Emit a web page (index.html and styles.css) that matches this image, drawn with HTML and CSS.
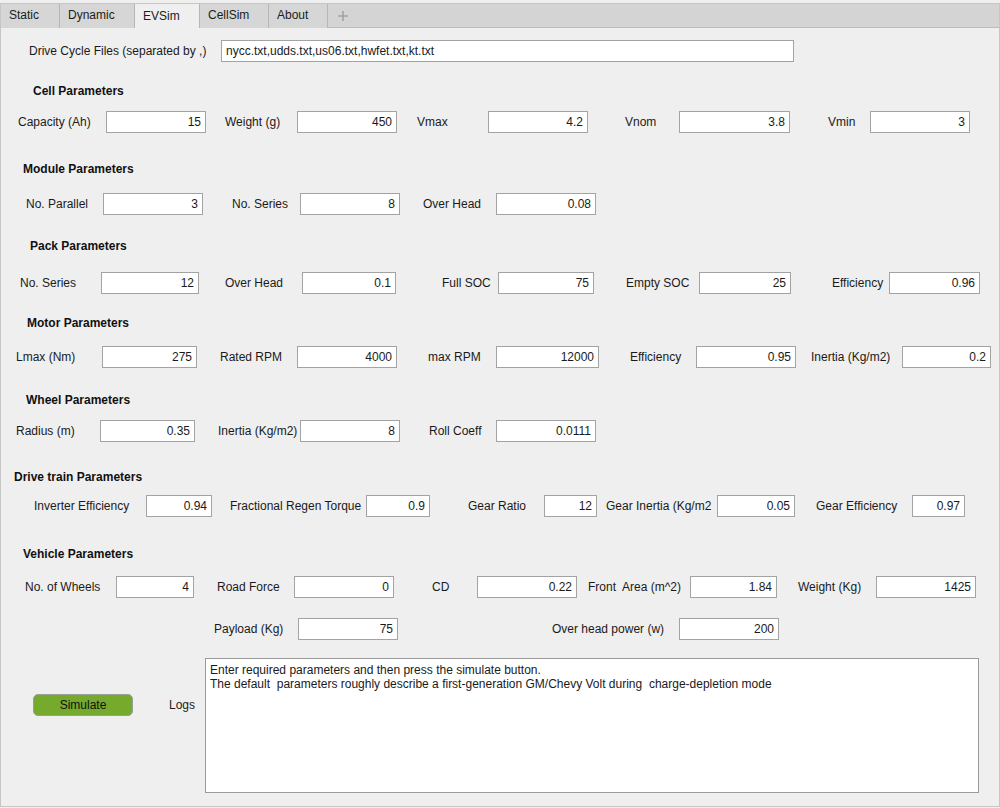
FILE: index.html
```html
<!DOCTYPE html>
<html>
<head>
<meta charset="utf-8">
<link rel="stylesheet" href="styles.css">
</head>
<body>
<div class="app">
  <div class="tabbar">
    <div class="tab w-static">Static</div>
    <div class="tab w-dynamic">Dynamic</div>
    <div class="tab w-evsim active">EVSim</div>
    <div class="tab w-cellsim">CellSim</div>
    <div class="tab w-about">About</div>
    <div class="tab-add">
      <svg width="12" height="12" viewBox="0 0 12 12"><path d="M6 1V11M1 6H11" stroke="#a2a2a2" stroke-width="1.6" fill="none"/></svg>
    </div>
  </div>
  <div class="panel">
    <div class="form">
      <div class="row r-files">
        <span class="lb">Drive Cycle Files (separated by ,)</span>
        <input class="in left" value="nycc.txt,udds.txt,us06.txt,hwfet.txt,kt.txt">
      </div>

      <h3 class="hd">Cell Parameters</h3>
      <div class="row r-cell">
        <span class="lb">Capacity (Ah)</span><input class="in" value="15">
        <span class="lb">Weight (g)</span><input class="in" value="450">
        <span class="lb">Vmax</span><input class="in" value="4.2">
        <span class="lb">Vnom</span><input class="in" value="3.8">
        <span class="lb">Vmin</span><input class="in" value="3">
      </div>

      <h3 class="hd">Module Parameters</h3>
      <div class="row r-module">
        <span class="lb">No. Parallel</span><input class="in" value="3">
        <span class="lb">No. Series</span><input class="in" value="8">
        <span class="lb">Over Head</span><input class="in" value="0.08">
      </div>

      <h3 class="hd">Pack Parameters</h3>
      <div class="row r-pack">
        <span class="lb">No. Series</span><input class="in" value="12">
        <span class="lb">Over Head</span><input class="in" value="0.1">
        <span class="lb">Full SOC</span><input class="in" value="75">
        <span class="lb">Empty SOC</span><input class="in" value="25">
        <span class="lb">Efficiency</span><input class="in" value="0.96">
      </div>

      <h3 class="hd">Motor Parameters</h3>
      <div class="row r-motor">
        <span class="lb">Lmax (Nm)</span><input class="in" value="275">
        <span class="lb">Rated RPM</span><input class="in" value="4000">
        <span class="lb">max RPM</span><input class="in" value="12000">
        <span class="lb">Efficiency</span><input class="in" value="0.95">
        <span class="lb">Inertia (Kg/m2)</span><input class="in" value="0.2">
      </div>

      <h3 class="hd">Wheel Parameters</h3>
      <div class="row r-wheel">
        <span class="lb">Radius (m)</span><input class="in" value="0.35">
        <span class="lb">Inertia (Kg/m2)</span><input class="in" value="8">
        <span class="lb">Roll Coeff</span><input class="in" value="0.0111">
      </div>

      <h3 class="hd">Drive train Parameters</h3>
      <div class="row r-drive">
        <span class="lb">Inverter Efficiency</span><input class="in" value="0.94">
        <span class="lb">Fractional Regen Torque</span><input class="in" value="0.9">
        <span class="lb">Gear Ratio</span><input class="in" value="12">
        <span class="lb">Gear Inertia (Kg/m2</span><input class="in" value="0.05">
        <span class="lb">Gear Efficiency</span><input class="in" value="0.97">
      </div>

      <h3 class="hd">Vehicle Parameters</h3>
      <div class="row r-vehicle">
        <span class="lb">No. of Wheels</span><input class="in" value="4">
        <span class="lb">Road Force</span><input class="in" value="0">
        <span class="lb">CD</span><input class="in" value="0.22">
        <span class="lb">Front  Area (m^2)</span><input class="in" value="1.84">
        <span class="lb">Weight (Kg)</span><input class="in" value="1425">
      </div>
      <div class="row r-vehicle2">
        <span class="lb">Payload (Kg)</span><input class="in" value="75">
        <span class="lb">Over head power (w)</span><input class="in" value="200">
      </div>

      <div class="bottom">
        <button class="sim">Simulate</button>
        <span class="logs-label">Logs</span>
        <div class="logs">Enter required parameters and then press the simulate button.
The default  parameters roughly describe a first-generation GM/Chevy Volt during  charge-depletion mode</div>
      </div>
    </div>
  </div>
</div>
</body>
</html>
```

FILE: styles.css
```css
* { box-sizing: border-box; }
html, body {
  margin: 0;
  padding: 0;
  background: #efefef;
}
body {
  font-family: "Liberation Sans", Arial, sans-serif;
  font-size: 12px;
  color: #1a1a1a;
}
.app {
  width: 1000px;
  height: 808px;
  padding-top: 3px;
  display: flex;
  flex-direction: column;
}

/* Tabs */
.tabbar {
  height: 25px;
  display: flex;
  background: #d4d4d4;
  border-top: 1px solid #c6c6c6;
  border-bottom: 1px solid #bdbdbd;
  border-left: 1px solid #c6c6c6;
  border-right: 1px solid #c6c6c6;
}
.tab {
  height: 24px;
  line-height: 23px;
  padding-left: 8px;
  border-right: 1px solid #b6b6b6;
  color: #1c1c1c;
  background: #d6d6d6;
}
.tab.active {
  background: #efefef;
  height: 25px;
  margin-top: -1px;
  line-height: 25px;
  border-top: 1px solid #c6c6c6;
}
.w-static { width: 59px; }
.w-dynamic { width: 75px; }
.w-evsim { width: 65px; }
.w-cellsim { width: 69px; }
.w-about { width: 59px; }
.tab-add {
  width: 30px;
  display: flex;
  align-items: center;
  justify-content: center;
}

/* Panel */
.panel {
  flex: 1;
  border-left: 1px solid #c6c6c6;
  border-right: 1px solid #c6c6c6;
  border-bottom: 1px solid #c6c6c6;
  margin-bottom: 1px;
  background: #efefef;
}
.form {
  display: grid;
  grid-template-rows: 34px 36px 35px 43px 39px 38px 41px 36px 38px 39px 35px 42px 33px 44px 37px 42px 153px;
}
.form > * { align-self: end; }

.hd {
  margin: 0;
  height: 16px;
  line-height: 18px;
  font-size: 12px;
  font-weight: bold;
  color: #111;
}
.hd:nth-of-type(1) { padding-left: 32px; }
.hd:nth-of-type(2) { padding-left: 22px; }
.hd:nth-of-type(3) { padding-left: 29px; }
.hd:nth-of-type(4) { padding-left: 26px; }
.hd:nth-of-type(5) { padding-left: 25px; }
.hd:nth-of-type(6) { padding-left: 13px; }
.hd:nth-of-type(7) { padding-left: 22px; }

/* Field rows */
.row {
  display: grid;
  height: 22px;
  align-items: center;
}
.row > :nth-child(1) { grid-column: 2; }
.row > :nth-child(2) { grid-column: 3; }
.row > :nth-child(3) { grid-column: 5; }
.row > :nth-child(4) { grid-column: 6; }
.row > :nth-child(5) { grid-column: 8; }
.row > :nth-child(6) { grid-column: 9; }
.row > :nth-child(7) { grid-column: 11; }
.row > :nth-child(8) { grid-column: 12; }
.row > :nth-child(9) { grid-column: 14; }
.row > :nth-child(10) { grid-column: 15; }

.r-files { grid-template-columns: 28px 192px 573px; }
.r-files > :nth-child(2) { grid-column: 3; }
.r-cell { grid-template-columns: 17px 88px 100px 19px 72px 100px 20px 71px 100px 37px 54px 111px 38px 42px 100px; }
.r-module { grid-template-columns: 25px 77px 100px 29px 68px 100px 23px 73px 100px; }
.r-pack { grid-template-columns: 19px 81px 98px 26px 77px 94px 46px 56px 96px 32px 73px 92px 41px 57px 91px; }
.r-motor { grid-template-columns: 15px 86px 95px 23px 77px 100px 31px 68px 103px 31px 66px 100px 15px 91px 89px; }
.r-wheel { grid-template-columns: 15px 84px 95px 23px 82px 100px 29px 67px 100px; }
.r-drive { grid-template-columns: 33px 112px 66px 18px 136px 64px 38px 76px 53px 9px 111px 78px 21px 96px 53px; }
.r-vehicle { grid-template-columns: 24px 91px 78px 23px 77px 100px 38px 45px 100px 11px 102px 87px 21px 78px 100px; }
.r-vehicle2 { grid-template-columns: 213px 84px 100px 154px 127px 100px; }

.lb {
  white-space: pre;
  line-height: 22px;
  overflow: visible;
  color: #1a1a1a;
}
.in {
  display: block;
  width: 100%;
  height: 22px;
  margin: 0;
  border: 1px solid #a3a3a3;
  background: #fff;
  font-family: "Liberation Sans", Arial, sans-serif;
  font-size: 12px;
  color: #1a1a1a;
  text-align: right;
  padding: 0 4px;
  outline: none;
}
.in.left { text-align: left; }

/* Bottom */
.bottom {
  display: grid;
  grid-template-columns: 32px 100px 36px 36px 774px;
  align-items: start;
  height: 135px;
}
.sim {
  grid-column: 2;
  margin-top: 36px;
  width: 100px;
  height: 22px;
  background: #76aa2d;
  border: 1px solid #9a9f95;
  border-radius: 5px;
  font-family: "Liberation Sans", Arial, sans-serif;
  font-size: 12px;
  color: #111;
  padding: 0;
}
.logs-label {
  grid-column: 4;
  margin-top: 36px;
  line-height: 22px;
}
.logs {
  grid-column: 5;
  height: 135px;
  background: #fff;
  border: 1px solid #9b9b9b;
  padding: 4px 4px;
  line-height: 14px;
  white-space: pre;
  color: #1a1a1a;
}
```
